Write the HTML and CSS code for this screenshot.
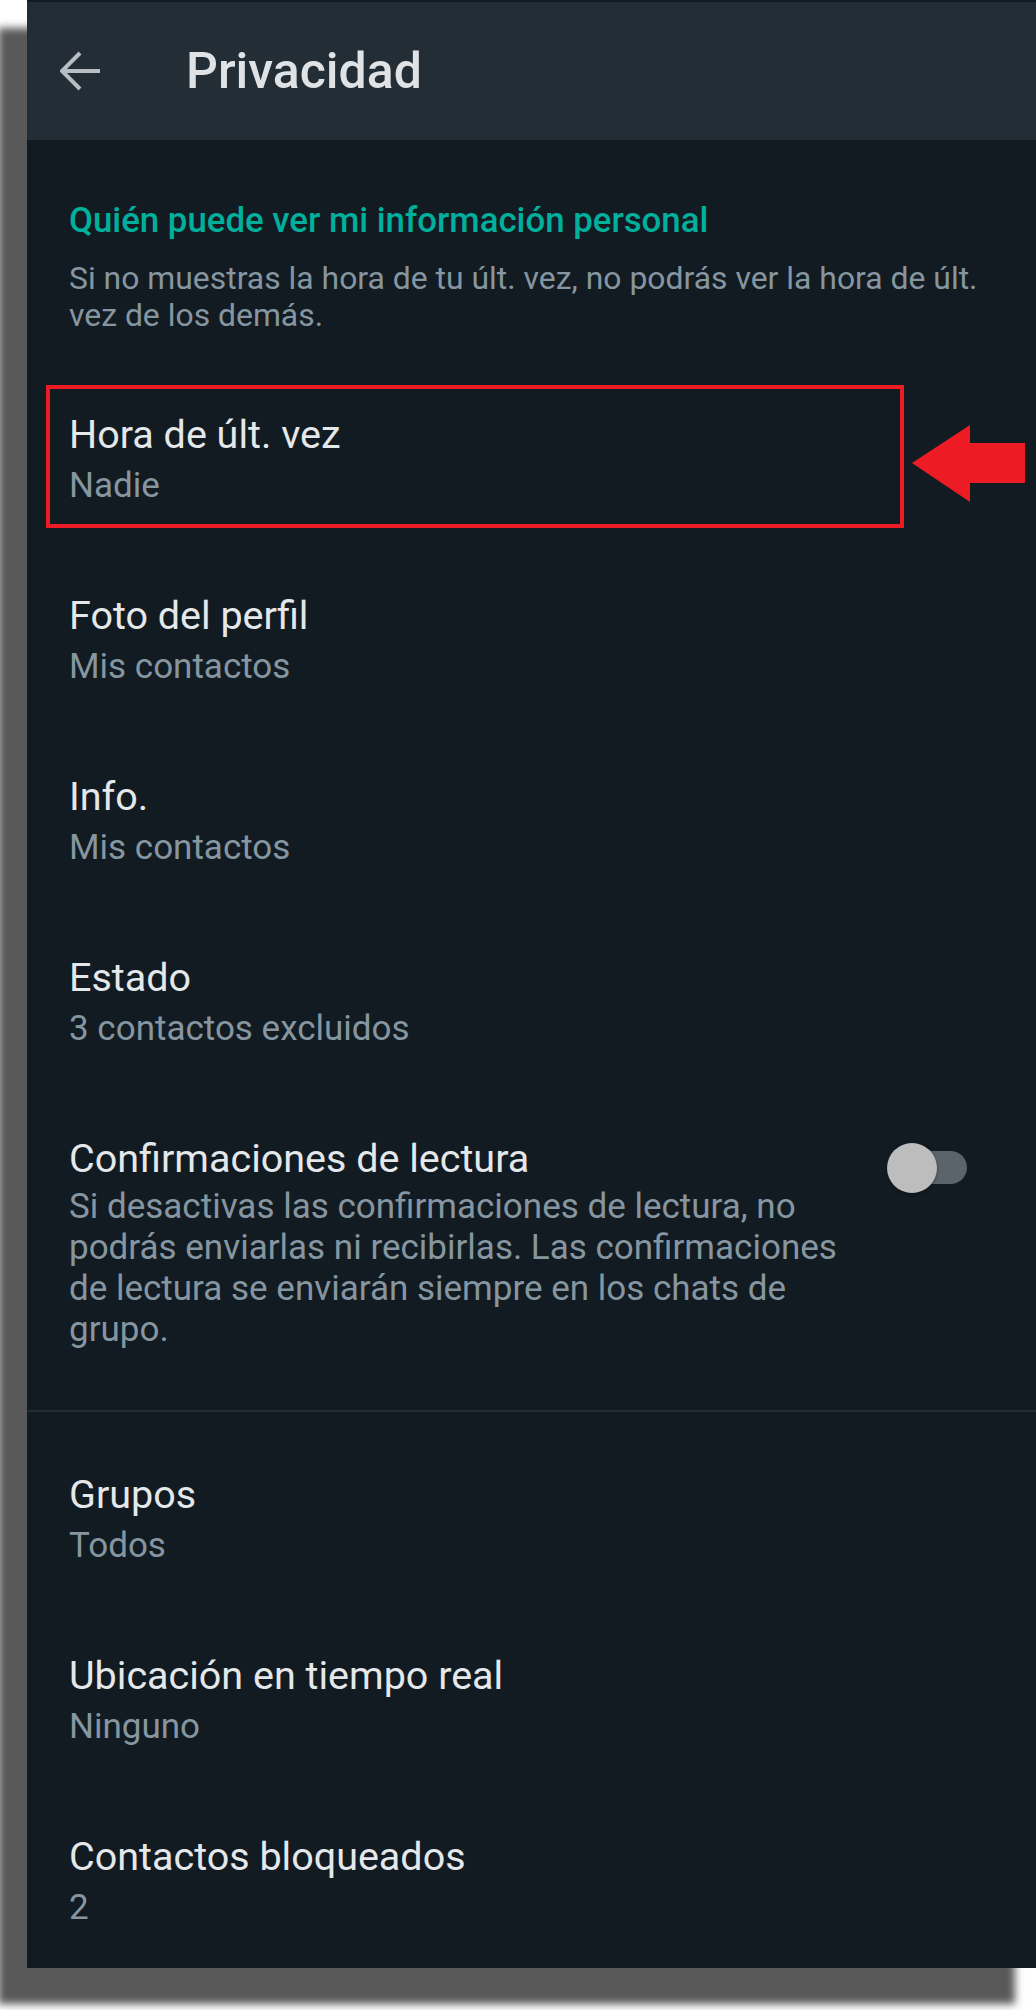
FILE: index.html
```html
<!DOCTYPE html>
<html lang="es">
<head>
  <meta charset="UTF-8">
  <meta name="viewport" content="width=device-width, initial-scale=1">
  <title>Privacidad</title>
  <link rel="stylesheet" href="styles.css">
</head>
<body>

  <div class="phone">
    <div class="statusbar"></div>

    <div class="appbar">
      <svg class="back" viewBox="0 0 40 40" width="40" height="40">
        <path d="M2 20H40M20 2L2 20L20 38" fill="none" stroke="#b9bec3" stroke-width="4"/>
      </svg>
      <h1>Privacidad</h1>
    </div>

    <div class="content">
      <div class="intro">
        <h2>Quién puede ver mi información personal</h2>
        <p>Si no muestras la hora de tu últ. vez, no podrás ver la hora de últ. vez de los demás.</p>
      </div>

      <ul class="settings">
        <li class="item marked">
          <div class="item-text">
            <div class="item-title">Hora de últ. vez</div>
            <div class="item-sub">Nadie</div>
          </div>
          <div class="mark-box"></div>
          <svg class="mark-arrow" viewBox="0 0 113 77" width="113" height="77">
            <polygon points="0,38 58,0 58,18 113,18 113,58 58,58 58,77" fill="#ed1c24"/>
          </svg>
        </li>
        <li class="item">
          <div class="item-text">
            <div class="item-title">Foto del perfil</div>
            <div class="item-sub">Mis contactos</div>
          </div>
        </li>
        <li class="item">
          <div class="item-text">
            <div class="item-title">Info.</div>
            <div class="item-sub">Mis contactos</div>
          </div>
        </li>
        <li class="item">
          <div class="item-text">
            <div class="item-title">Estado</div>
            <div class="item-sub">3 contactos excluidos</div>
          </div>
        </li>
        <li class="item">
          <div class="item-text">
            <div class="item-title">Confirmaciones de lectura</div>
            <div class="item-desc">Si desactivas las confirmaciones de lectura, no podrás enviarlas ni recibirlas. Las confirmaciones de lectura se enviarán siempre en los chats de grupo.</div>
          </div>
          <div class="switch">
            <div class="switch-track"></div>
            <div class="switch-thumb"></div>
          </div>
        </li>
      </ul>

      <div class="divider"></div>

      <ul class="settings">
        <li class="item">
          <div class="item-text">
            <div class="item-title">Grupos</div>
            <div class="item-sub">Todos</div>
          </div>
        </li>
        <li class="item">
          <div class="item-text">
            <div class="item-title">Ubicación en tiempo real</div>
            <div class="item-sub">Ninguno</div>
          </div>
        </li>
        <li class="item">
          <div class="item-text">
            <div class="item-title">Contactos bloqueados</div>
            <div class="item-sub">2</div>
          </div>
        </li>
      </ul>
    </div>
  </div>

</body>
</html>
```

FILE: styles.css
```css
* {
  margin: 0;
  padding: 0;
  box-sizing: border-box;
  font-family: 'Roboto', 'Liberation Sans', sans-serif;
}

html, body {
  width: 1036px;
  height: 2010px;
  overflow: hidden;
}

body {
  background: #ffffff;
}

.phone {
  margin-left: 27px;
  width: 1009px;
  height: 1968px;
  background: #121b22;
  overflow: hidden;
  box-shadow: -25px 32px 8px 4px #595959;
}

.statusbar {
  height: 2px;
  background: #121b22;
}

.appbar {
  height: 138px;
  background: #232d36;
  display: flex;
  align-items: center;
  padding-left: 33px;
}

.appbar .back {
  display: block;
  flex: none;
}

.appbar h1 {
  margin-left: 86px;
  font-size: 50px;
  font-weight: 500;
  color: #dfe3e6;
  line-height: 60px;
}

.intro {
  padding: 60px 42px 0;
  margin-bottom: 35px;
}

.intro h2 {
  font-size: 34.8px;
  line-height: 40px;
  font-weight: 500;
  color: #00af9c;
}

.intro p {
  margin-top: 20px;
  font-size: 31.9px;
  line-height: 37px;
  color: #8696a0;
}

.settings {
  list-style: none;
}

.item {
  position: relative;
  display: flex;
  gap: 30px;
  padding: 42px 69px 42px 42px;
}

.item-text {
  flex: 1;
}

.item-title {
  font-size: 39.5px;
  line-height: 48px;
  color: #e4e8ea;
}

.item-sub {
  margin-top: 5px;
  font-size: 35px;
  line-height: 44px;
  color: #8696a0;
}

.item-desc {
  margin-top: 3px;
  font-size: 35px;
  line-height: 41px;
  color: #8696a0;
}

.mark-box {
  position: absolute;
  top: 16px;
  left: 19px;
  width: 858px;
  height: 143px;
  border: 4px solid #ed1c24;
}

.mark-arrow {
  position: absolute;
  top: 56px;
  left: 885px;
}

.switch {
  position: relative;
  flex: none;
  width: 80px;
  height: 50px;
  margin-top: 8px;
}

.switch-track {
  position: absolute;
  top: 8px;
  left: 10px;
  width: 70px;
  height: 33px;
  border-radius: 17px;
  background: #5b646b;
}

.switch-thumb {
  position: absolute;
  top: 0;
  left: 0;
  width: 50px;
  height: 50px;
  border-radius: 50%;
  background: #bdbdbd;
  box-shadow: 0 1px 3px rgba(0,0,0,0.4);
}

.divider {
  height: 2px;
  margin: 18px 0 17px;
  background: #222d34;
}
```
